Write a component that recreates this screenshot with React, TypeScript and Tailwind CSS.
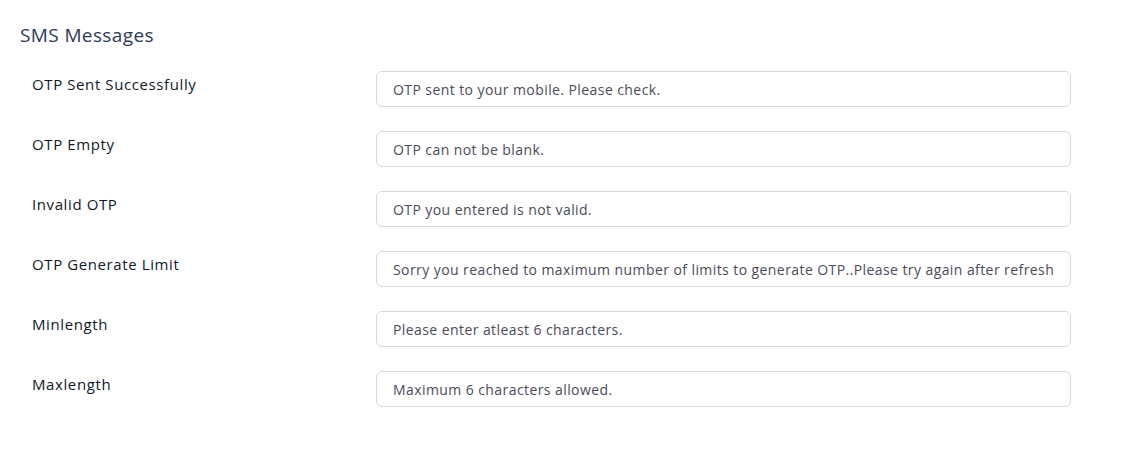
const rows = [
  { label: 'OTP Sent Successfully', value: 'OTP sent to your mobile. Please check.' },
  { label: 'OTP Empty', value: 'OTP can not be blank.' },
  { label: 'Invalid OTP', value: 'OTP you entered is not valid.' },
  {
    label: 'OTP Generate Limit',
    value: 'Sorry you reached to maximum number of limits to generate OTP..Please try again after refresh',
  },
  { label: 'Minlength', value: 'Please enter atleast 6 characters.' },
  { label: 'Maxlength', value: 'Maximum 6 characters allowed.' },
];

export default function App() {
  return (
    <div className="w-[1125px] h-[463px] bg-white pt-[22px] pl-5 font-['Open_Sans',sans-serif]">
      <h2 className="text-[19px] leading-[26px] text-[#2e3a59] tracking-[0.02em]">SMS Messages</h2>
      <div className="mt-[23px] pl-3 space-y-6">
        {rows.map((row) => (
          <div key={row.label} className="flex items-start">
            <label className="w-[344px] pt-[3px] text-[15px] leading-[20px] font-medium tracking-[0.04em] text-[#111827]">
              {row.label}
            </label>
            <input
              readOnly
              value={row.value}
              className="w-[695px] h-[36px] px-4 rounded-md border border-[#d3d7e0] text-[14px] tracking-[0.03em] text-[#4b4b5a] outline-none"
            />
          </div>
        ))}
      </div>
    </div>
  );
}
